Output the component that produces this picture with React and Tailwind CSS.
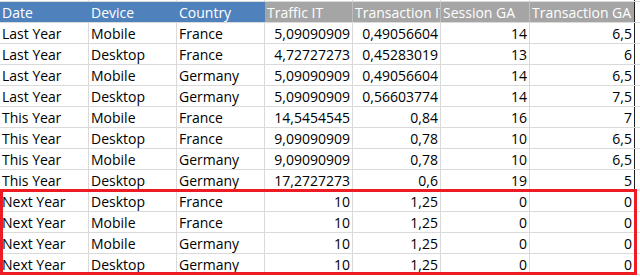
const columns = [
  { label: 'Date', head: 'blue', w: 'w-[89px]' },
  { label: 'Device', head: 'blue', w: 'w-[88px]' },
  { label: 'Country', head: 'blue', w: 'w-[88px]' },
  { label: 'Traffic IT', head: 'gray', w: 'w-[88px]', num: true },
  { label: 'Transaction IT', head: 'gray', w: 'w-[88px]', num: true },
  { label: 'Session GA', head: 'gray', w: 'w-[89px]', num: true },
  { label: 'Transaction GA', head: 'gray', w: 'w-[105px]', num: true, last: true },
];

const rows = [
  ['Last Year', 'Mobile', 'France', '5,09090909', '0,49056604', '14', '6,5'],
  ['Last Year', 'Desktop', 'France', '4,72727273', '0,45283019', '13', '6'],
  ['Last Year', 'Mobile', 'Germany', '5,09090909', '0,49056604', '14', '6,5'],
  ['Last Year', 'Desktop', 'Germany', '5,09090909', '0,56603774', '14', '7,5'],
  ['This Year', 'Mobile', 'France', '14,5454545', '0,84', '16', '7'],
  ['This Year', 'Desktop', 'France', '9,09090909', '0,78', '10', '6,5'],
  ['This Year', 'Mobile', 'Germany', '9,09090909', '0,78', '10', '6,5'],
  ['This Year', 'Desktop', 'Germany', '17,2727273', '0,6', '19', '5'],
  ['Next Year', 'Desktop', 'France', '10', '1,25', '0', '0'],
  ['Next Year', 'Mobile', 'France', '10', '1,25', '0', '0'],
  ['Next Year', 'Mobile', 'Germany', '10', '1,25', '0', '0'],
  ['Next Year', 'Desktop', 'Germany', '10', '1,25', '0', '0'],
];

function edge(col) {
  return col.last ? 'border-r border-r-[#1f1f1f]' : 'border-r border-r-[#dadada]';
}

export default function App() {
  return (
    <div className="relative w-[640px] h-[277px] overflow-hidden bg-white font-['Open_Sans',sans-serif] text-[14px] text-black">
      {/* sliver of the row above */}
      <div className="flex h-[2px] border-b border-b-[#dadada]">
        {columns.map((c) => (
          <div key={c.label} className={`${c.w} shrink-0 ${edge(c)}`} />
        ))}
      </div>

      {/* header */}
      <div className="flex h-[21px] border-b border-b-[#dadada]">
        {columns.map((c) => (
          <div
            key={c.label}
            className={`${c.w} shrink-0 flex items-end overflow-hidden whitespace-nowrap pl-[2px] pb-[0px] leading-[18px] text-white ${
              c.head === 'blue' ? 'bg-[#4f81bd]' : 'bg-[#a5a5a5]'
            } ${c.last ? 'border-r border-r-[#1f1f1f]' : c.head === 'blue' ? 'border-r border-r-[#4f81bd]' : 'border-r border-r-[#bdbdbd]'}`}
          >
            {c.label}
          </div>
        ))}
      </div>

      {rows.map((r, i) => (
        <div key={i} className="flex h-[21px] border-b border-b-[#dadada]">
          {r.map((v, j) => {
            const c = columns[j];
            return (
              <div
                key={j}
                className={`${c.w} shrink-0 flex items-end overflow-hidden whitespace-nowrap leading-[18px] ${
                  c.num ? 'justify-end pr-[2px]' : 'pl-[2px]'
                } ${edge(c)}`}
              >
                {v}
              </div>
            );
          })}
        </div>
      ))}

      {/* highlight around the forecast rows */}
      <div className="absolute left-0 top-[189px] w-[637px] h-[86px] border-[3px] border-[#ed1c24]" />
    </div>
  );
}
